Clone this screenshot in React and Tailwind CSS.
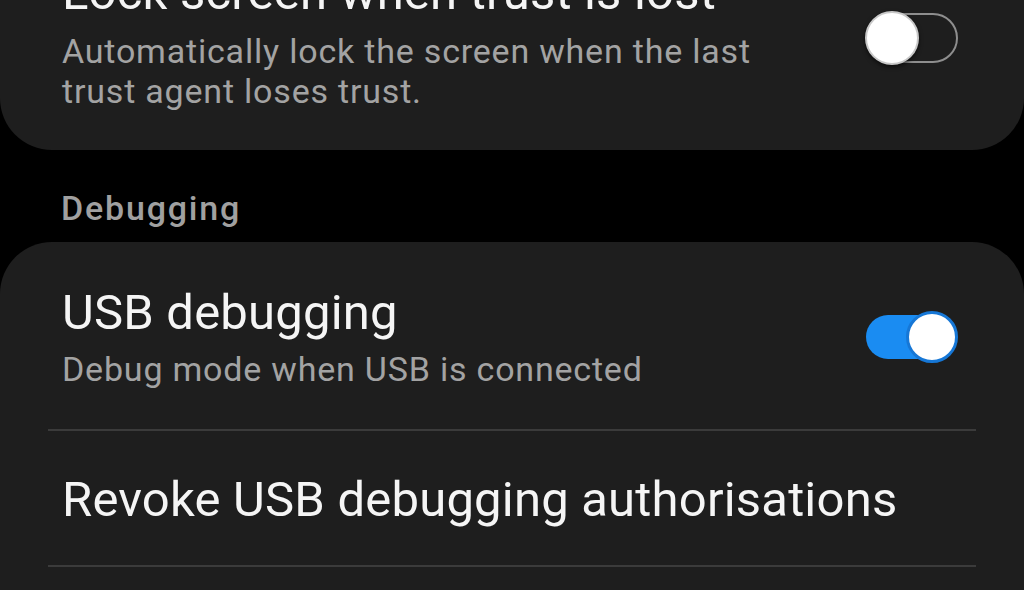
export default function App() {
  const font = { fontFamily: 'Roboto, "Noto Sans", "Liberation Sans", sans-serif' };
  return (
    <div className="w-[1024px] h-[590px] overflow-hidden bg-black flex flex-col" style={font}>
      {/* Top card */}
      <div className="mt-[-36px] bg-[#1e1e1e] rounded-b-[52px] flex items-center pl-[62px] pr-[66px] pb-[39px] shrink-0">
        <div className="flex-1 flex flex-col">
          <div className="text-[49px] leading-[57px] tracking-[0.2px] text-[#f5f5f5] whitespace-nowrap">Lock screen when trust is lost</div>
          <div className="mt-[10px] text-[34px] leading-[40px] tracking-[0.8px] text-[#a3a3a3]">
            Automatically lock the screen when the last<br />trust agent loses trust.
          </div>
        </div>
        <ToggleOff />
      </div>

      {/* Section header */}
      <div className="mt-[38px] pl-[61px] text-[34px] leading-[40px] tracking-[1.8px] font-medium text-[#a0a0a0] shrink-0">Debugging</div>

      {/* Bottom card */}
      <div className="mt-[14px] bg-[#1e1e1e] rounded-t-[52px] flex-1 flex flex-col">
        <div className="flex items-center pl-[62px] pr-[66px] pt-[42px] pb-[40px]">
          <div className="flex-1 flex flex-col">
            <div className="text-[49px] leading-[57px] tracking-[0.2px] text-[#f5f5f5]">USB debugging</div>
            <div className="mt-[8px] text-[34px] leading-[40px] tracking-[0.8px] text-[#a3a3a3]">Debug mode when USB is connected</div>
          </div>
          <ToggleOn />
        </div>
        <div className="mx-[48px] h-[2px] bg-[#3b3b3b]" />
        <div className="pl-[62px] pr-[66px] pt-[40px] pb-[37px]">
          <div className="text-[49px] leading-[57px] tracking-[0.2px] text-[#f5f5f5]">Revoke USB debugging authorisations</div>
        </div>
        <div className="mx-[48px] h-[2px] bg-[#3b3b3b]" />
      </div>
    </div>
  );
}

function ToggleOff() {
  return (
    <div className="relative w-[93px] h-[54px] shrink-0">
      <div className="absolute left-[1px] right-0 top-[2px] h-[50px] rounded-full border-2 border-[#8e8e8e]" />
      <div className="absolute left-0 top-0 w-[54px] h-[54px] rounded-full bg-white border-2 border-[#c8c8c8] shadow-[0_2px_4px_rgba(0,0,0,0.6)]" />
    </div>
  );
}

function ToggleOn() {
  return (
    <div className="relative w-[93px] h-[54px] shrink-0">
      <div className="absolute left-[1px] right-[2px] top-[5px] h-[44px] rounded-full bg-[#1a8cf2]" />
      <div className="absolute right-0 top-[1px] w-[52px] h-[52px] rounded-full bg-white border-[3px] border-[#1677d6]" />
    </div>
  );
}
